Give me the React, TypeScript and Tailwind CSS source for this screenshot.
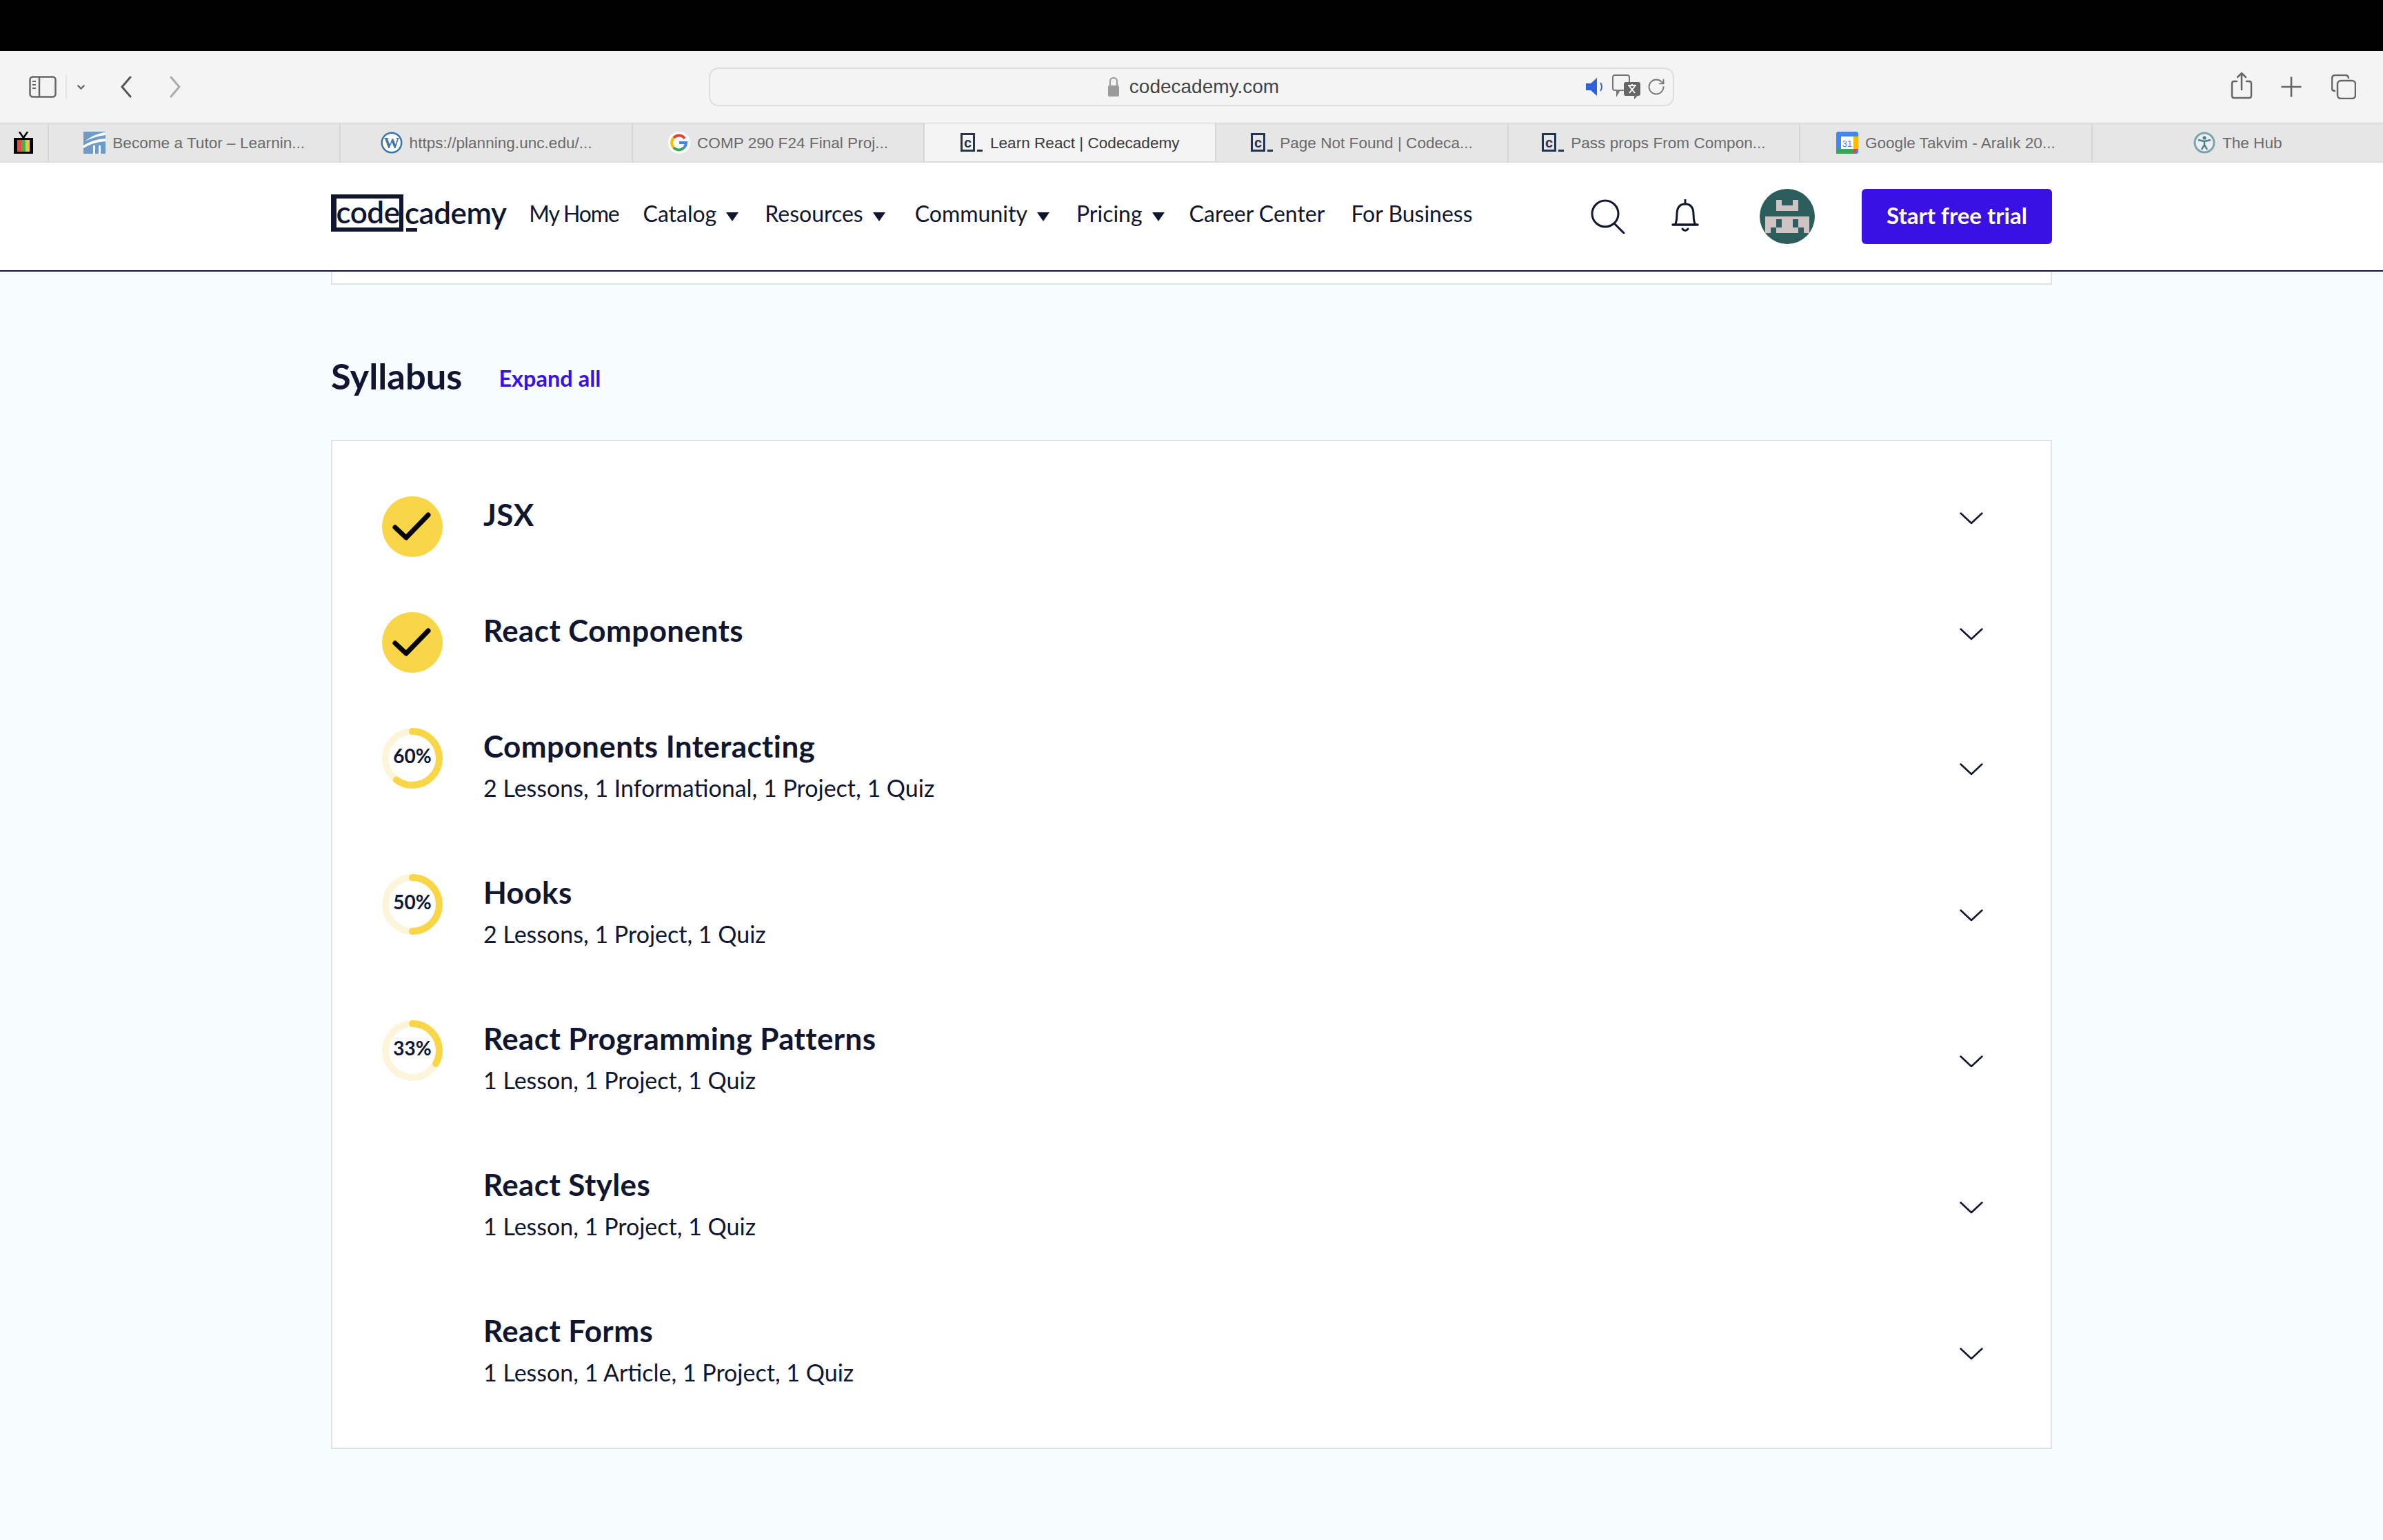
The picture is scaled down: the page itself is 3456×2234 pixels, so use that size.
import React from 'react';
import { ChevronDown, Plus, RotateCw } from 'lucide-react';

const INK = '#10162f';

interface Tab {
  title: string;
  icon: React.ReactNode;
  active?: boolean;
}

const CodeFavicon = () => (
  <span className="flex items-end shrink-0 gap-[3px]">
    <span className="w-[21px] h-[27px] border-[3px] border-[#24344f] flex items-center justify-center font-['Liberation_Sans',sans-serif] text-[20px] leading-none text-[#24344f] font-bold">c</span>
    <span className="w-[8px] h-[3px] bg-[#24344f]" />
  </span>
);

const tabs: Tab[] = [
  {
    title: 'Become a Tutor – Learnin...',
    icon: (
      <svg width="32" height="32" viewBox="0 0 32 32" className="shrink-0">
        <rect width="32" height="32" fill="#6f9bc9" />
        <path d="M2 14 Q14 4 30 1 L32 1 L32 5 Q16 7 2 14Z M0 20 Q14 11 32 10 L32 14 Q14 15 0 24Z" fill="#fff" />
        <rect x="14" y="20" width="3" height="12" fill="#fff" />
        <rect x="22" y="20" width="3" height="12" fill="#fff" />
      </svg>
    ),
  },
  {
    title: 'https://planning.unc.edu/...',
    icon: (
      <svg width="32" height="32" viewBox="0 0 32 32" className="shrink-0">
        <circle cx="16" cy="16" r="15.5" fill="#3d74a6" />
        <circle cx="16" cy="16" r="13" fill="#fff" />
        <text x="16" y="24" textAnchor="middle" fontSize="23" fontWeight="700" fontFamily="Liberation Serif, serif" fill="#3d74a6">W</text>
      </svg>
    ),
  },
  {
    title: 'COMP 290 F24 Final Proj...',
    icon: (
      <svg width="32" height="32" viewBox="0 0 32 32" className="shrink-0">
        <circle cx="16" cy="16" r="16" fill="#fff" />
        <path d="M24 10 A10 10 0 0 0 8 9" fill="none" stroke="#ea4335" strokeWidth="4" />
        <path d="M8 9 A10 10 0 0 0 8 23" fill="none" stroke="#fbbc05" strokeWidth="4" />
        <path d="M8 23 A10 10 0 0 0 23 23" fill="none" stroke="#34a853" strokeWidth="4" />
        <path d="M23 23 A10 10 0 0 0 26 16 L16 16" fill="none" stroke="#4285f4" strokeWidth="4" />
      </svg>
    ),
  },
  { title: 'Learn React | Codecademy', icon: <CodeFavicon />, active: true },
  { title: 'Page Not Found | Codeca...', icon: <CodeFavicon /> },
  { title: 'Pass props From Compon...', icon: <CodeFavicon /> },
  {
    title: 'Google Takvim - Aralık 20...',
    icon: (
      <svg width="32" height="32" viewBox="0 0 32 32" className="shrink-0">
        <rect width="32" height="32" rx="3" fill="#4285f4" />
        <rect x="7" y="7" width="18" height="18" fill="#fff" />
        <rect x="25" y="7" width="7" height="18" fill="#fbbc05" />
        <rect y="25" width="25" height="7" fill="#34a853" />
        <path d="M25 25 L32 25 L25 32Z" fill="#ea4335" />
        <text x="16" y="22" textAnchor="middle" fontSize="13" fontFamily="Liberation Sans, sans-serif" fill="#4285f4">31</text>
      </svg>
    ),
  },
  {
    title: 'The Hub',
    icon: (
      <svg width="32" height="32" viewBox="0 0 32 32" className="shrink-0">
        <circle cx="16" cy="16" r="14" fill="#eaf0f1" stroke="#7fa3ab" strokeWidth="3" />
        <circle cx="16" cy="9" r="2.5" fill="#4c7f8a" />
        <path d="M7 12 L16 14 L25 12 M16 14 L16 19 L12 26 M16 19 L20 26" fill="none" stroke="#4c7f8a" strokeWidth="2.5" />
      </svg>
    ),
  },
];

const BrowserChrome = () => (
  <div className="font-['Liberation_Sans',sans-serif]">
    <div className="h-[74px] bg-black" />
    <div className="h-[104px] bg-[#f4f4f4] flex items-center relative">
      <div className="flex items-center pl-[42px] w-[1028px] shrink-0">
        <svg width="40" height="32" viewBox="0 0 40 32" fill="none" stroke="#666" strokeWidth="2.5">
          <rect x="1.5" y="1.5" width="37" height="29" rx="4" />
          <path d="M15 2 V30" />
          <path d="M5 8 H10 M5 13 H10 M5 18 H10" strokeWidth="2" />
        </svg>
        <span className="w-[2px] h-[36px] bg-[#e3e3e3] ml-[13px]" />
        <ChevronDown size={17} strokeWidth={3} className="text-[#666] ml-[12px]" />
        <svg width="18" height="32" viewBox="0 0 18 32" fill="none" stroke="#555" strokeWidth="3" strokeLinecap="round" strokeLinejoin="round" className="ml-[48px]">
          <path d="M15 2 L3 16 L15 30" />
        </svg>
        <svg width="18" height="32" viewBox="0 0 18 32" fill="none" stroke="#aaa" strokeWidth="3" strokeLinecap="round" strokeLinejoin="round" className="ml-[53px]">
          <path d="M3 2 L15 16 L3 30" />
        </svg>
      </div>
      <div className="w-[1400px] h-[56px] border-2 border-[#dedede] rounded-[14px] flex items-center relative shrink-0">
        <div className="flex-1 flex items-center justify-center gap-[13px] pl-[4px]">
          <svg width="20" height="30" viewBox="0 0 20 30">
            <path d="M5 14 V7 Q5 2 10 2 Q15 2 15 7 V14" fill="none" stroke="#9a9a9a" strokeWidth="2" />
            <rect x="2" y="13" width="16" height="16" rx="2" fill="#9a9a9a" />
          </svg>
          <span className="text-[28px] text-[#444] leading-none">codecademy.com</span>
        </div>
        <div className="absolute right-[10px] top-[8px] flex items-center gap-[8px]">
          <svg width="32" height="32" viewBox="0 0 32 32">
            <path d="M2 11 H9 L18 3 V29 L9 21 H2Z" fill="#2f62d9" />
            <path d="M23 10 Q27 16 23 22" fill="none" stroke="#2f62d9" strokeWidth="2" />
          </svg>
          <svg width="42" height="36" viewBox="0 0 42 36">
            <rect x="1" y="1" width="24" height="22" rx="3" fill="#f4f4f4" stroke="#777" strokeWidth="2" />
            <rect x="17" y="11" width="24" height="20" rx="3" fill="#666" />
            <path d="M6 33 L6 23 L12 23Z M32 36 L32 30 L38 30Z" fill="#777" />
            <path d="M23 16 H35 M29 14 V17 M25 27 L33 17 M25 17 L33 27" stroke="#fff" strokeWidth="2" fill="none" />
          </svg>
          <RotateCw size={28} strokeWidth={1.6} className="text-[#777]" />
        </div>
      </div>
      <div className="flex-1 flex items-center justify-end pr-[39px]">
        <svg width="32" height="40" viewBox="0 0 32 40" fill="none" stroke="#666" strokeWidth="2.5" strokeLinecap="round" className="-mt-[4px]">
          <path d="M9 14 H5 Q2 14 2 17 V35 Q2 38 5 38 H27 Q30 38 30 35 V17 Q30 14 27 14 H23" />
          <path d="M16 26 V2 M10 8 L16 2 L22 8" />
        </svg>
        <Plus size={46} strokeWidth={1.4} className="text-[#666] ml-[33px] mr-[35px]" />
        <svg width="36" height="36" viewBox="0 0 36 36" fill="none" stroke="#666" strokeWidth="2.5">
          <path d="M6 24 Q1 24 1 20 V6 Q1 1 6 1 H20 Q25 1 25 6" />
          <rect x="9" y="9" width="26" height="26" rx="5" />
        </svg>
      </div>
    </div>
    <div className="h-[58px] bg-[#e6e6e6] border-t border-t-[#cfcfcf] border-b-2 border-b-[#dcdcdc] flex">
      <div className="w-[71px] shrink-0 border-r-2 border-[#d6d6d6] flex items-center justify-center">
        <svg width="28" height="32" viewBox="0 0 28 32" className="-ml-[1px]">
          <path d="M8 0 L14 9 L20 0" fill="none" stroke="#000" strokeWidth="2.5" />
          <rect y="9" width="28" height="23" fill="#000" />
          <rect x="5" y="12" width="6" height="17" fill="#e94b3c" />
          <rect x="11" y="12" width="6" height="17" fill="#48b04a" />
          <rect x="17" y="12" width="6" height="17" fill="#e8c93a" />
        </svg>
      </div>
      {tabs.map((tab) => (
        <div
          key={tab.title}
          className={
            tab.active
              ? 'w-[423px] shrink-0 bg-[#f4f4f4] border-r-2 border-[#d6d6d6] flex items-center justify-center gap-[11px] text-[#3a3a3a] text-[22.6px]'
              : 'w-[423px] flex-1 border-r-2 border-[#d6d6d6] last:border-r-0 flex items-center justify-center gap-[10px] text-[#6a6a6a] text-[22.6px]'
          }
        >
          {tab.icon}
          <span className="whitespace-nowrap translate-y-[1px]">{tab.title}</span>
        </div>
      ))}
    </div>
  </div>
);

const NavLink = ({ label, arrow, tight }: { label: string; arrow?: boolean; tight?: boolean }) => (
  <span className="flex items-center text-[32px] leading-none whitespace-nowrap">
    <span className={tight ? '-translate-y-[4px] tracking-[-1.2px]' : '-translate-y-[4px]'}>{label}</span>
    {arrow && <span className="ml-[14px] w-0 h-0 border-x-[9px] border-x-transparent border-t-[13px] border-t-[#10162f]" />}
  </span>
);

const Navbar = () => (
  <div className="h-[158px] bg-white border-b-2 border-[#10162f] flex justify-center">
    <div className="w-[2496px] flex items-center text-[#10162f]">
      <div className="flex items-center h-[54px] font-semibold text-[46px] leading-none tracking-[-0.5px] mr-[33px] relative -translate-y-[5px]">
        <span className="border-[6px] border-l-[8px] border-[#10162f] w-[105px] h-[54px] flex items-center justify-center text-[44px] pb-[4px]">code</span>
        <span className="pl-[2px] pb-[2px] text-[44px]">cademy</span>
        <span className="absolute left-[109px] bottom-0 w-[16px] h-[5px] bg-[#10162f]" />
      </div>
      <NavLink label="My Home" tight />
      <span className="w-[35px]" />
      <NavLink label="Catalog" arrow />
      <span className="w-[38px]" />
      <NavLink label="Resources" arrow />
      <span className="w-[43px]" />
      <NavLink label="Community" arrow />
      <span className="w-[39px]" />
      <NavLink label="Pricing" arrow />
      <span className="w-[36px]" />
      <NavLink label="Career Center" />
      <span className="w-[38px]" />
      <NavLink label="For Business" />
      <div className="ml-auto flex items-center">
        <svg width="50" height="50" viewBox="0 0 50 50" fill="none" stroke={INK} strokeWidth="3" strokeLinecap="round">
          <circle cx="21" cy="21" r="19" />
          <path d="M34 35 L48 49" />
        </svg>
        <svg width="40" height="50" viewBox="0 0 40 50" fill="none" stroke={INK} strokeWidth="3" strokeLinecap="round" className="ml-[67px]">
          <path d="M20 1 V7 M6 36 Q8 30 8 22 Q8 7 20 7 Q32 7 32 22 Q32 30 34 36" />
          <path d="M2 37 H38" strokeWidth="3.5" />
          <path d="M16 43 Q20 48 24 43" />
        </svg>
        <span className="w-[80px] h-[80px] rounded-full bg-[#2a5d5c] ml-[88px] overflow-hidden shrink-0">
          <svg width="80" height="80" viewBox="0 0 80 80" fill="#cfc2c2">
            <path d="M24 16 H32 V24 H48 V16 H56 V32 H24Z" />
            <path d="M8 40 H72 V64 H64 V56 H56 V44 H48 V56 H32 V44 H24 V56 H16 V64 H8Z" />
            <path d="M24 56 H56 V64 H24Z" />
          </svg>
        </span>
        <button className="w-[276px] h-[80px] bg-[#3a10e5] text-white rounded-[6px] text-[33px] font-bold ml-[68px] pb-[3px]">
          Start free trial
        </button>
      </div>
    </div>
  </div>
);

const Progress = ({ pct }: { pct: number }) => {
  const r = 39;
  const circumference = 2 * Math.PI * r;
  return (
    <div className="w-[88px] h-[88px] relative flex items-center justify-center shrink-0">
      <svg width="88" height="88" viewBox="0 0 88 88" className="absolute inset-0 -rotate-90">
        <circle cx="44" cy="44" r={r} fill="none" stroke="#fdf5d9" strokeWidth="10" />
        <circle
          cx="44"
          cy="44"
          r={r}
          fill="none"
          stroke="#f9d548"
          strokeWidth="10"
          strokeLinecap="round"
          strokeDasharray={`${(circumference * pct) / 100} ${circumference}`}
        />
      </svg>
      <span className="text-[28px] font-bold leading-none text-[#10162f] -translate-y-[4px]">{pct}%</span>
    </div>
  );
};

const Done = () => (
  <div className="w-[88px] h-[88px] rounded-full bg-[#f9d548] flex items-center justify-center shrink-0">
    <svg width="56" height="42" viewBox="0 0 56 42" fill="none" stroke="#000" strokeWidth="7" strokeLinecap="round" strokeLinejoin="round" className="-ml-[2px]">
      <path d="M4 22 L20 37 L52 4" />
    </svg>
  </div>
);

interface Row {
  title: string;
  detail?: string;
  done?: boolean;
  pct?: number;
}

const rows: Row[] = [
  { title: 'JSX', done: true },
  { title: 'React Components', done: true },
  { title: 'Components Interacting', detail: '2 Lessons, 1 Informational, 1 Project, 1 Quiz', pct: 60 },
  { title: 'Hooks', detail: '2 Lessons, 1 Project, 1 Quiz', pct: 50 },
  { title: 'React Programming Patterns', detail: '1 Lesson, 1 Project, 1 Quiz', pct: 33 },
  { title: 'React Styles', detail: '1 Lesson, 1 Project, 1 Quiz' },
  { title: 'React Forms', detail: '1 Lesson, 1 Article, 1 Project, 1 Quiz' },
];

const SyllabusRow = ({ row }: { row: Row }) => (
  <div className={row.detail ? 'flex items-start min-h-[132px]' : 'flex items-start min-h-[88px]'}>
    <div className="w-[88px] shrink-0">
      {row.done && <Done />}
      {row.pct !== undefined && <Progress pct={row.pct} />}
    </div>
    <div className="flex-1 flex items-center justify-between ml-[59px] min-h-[64px]">
      <div className="self-start text-[#10162f] pb-[3px]">
        <div className="text-[44px] leading-[52px] font-bold tracking-[0.4px]">{row.title}</div>
        {row.detail && <div className="text-[34px] leading-[60px] mt-[5px]">{row.detail}</div>}
      </div>
      <svg width="34" height="18" viewBox="0 0 34 18" fill="none" stroke={INK} strokeWidth="2.5" strokeLinecap="round" strokeLinejoin="round">
        <path d="M1.5 1.5 L17 16 L32.5 1.5" />
      </svg>
    </div>
  </div>
);

export default function App() {
  return (
    <div className="min-h-[2234px] bg-[#f6fcff] font-['Lato',sans-serif]">
      <BrowserChrome />
      <Navbar />
      <main className="w-[2496px] mx-auto">
        <div className="h-[19px] bg-white border-2 border-t-0 border-[#e0e3e6]" />
        <div className="flex items-baseline gap-[53px] h-[60px] mt-[102px] mb-[63px]">
          <h2 className="text-[52.5px] leading-[60px] font-bold text-[#10162f]">Syllabus</h2>
          <span className="text-[32.5px] font-bold text-[#3a10e5] -translate-y-[4px]">Expand all</span>
        </div>
        <div className="bg-white border-2 border-[#e0e3e6] pt-[80px] pb-[64px] pl-[72px] pr-[98px] flex flex-col gap-[80px]">
          {rows.map((row) => (
            <SyllabusRow key={row.title} row={row} />
          ))}
        </div>
      </main>
    </div>
  );
}
